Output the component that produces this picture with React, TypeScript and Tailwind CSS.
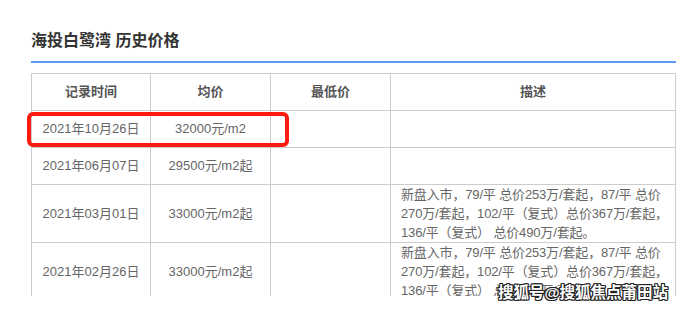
const font = { fontFamily: '"Liberation Sans", "Noto Sans CJK SC", sans-serif' };

const rows = [
  { date: "2021年10月26日", price: "32000元/m2", low: "", desc: [] as string[] },
  { date: "2021年06月07日", price: "29500元/m2起", low: "", desc: [] as string[] },
  {
    date: "2021年03月01日",
    price: "33000元/m2起",
    low: "",
    desc: [
      "新盘入市，79/平 总价253万/套起，87/平 总价",
      "270万/套起，102/平（复式）总价367万/套起，",
      "136/平（复式） 总价490万/套起。",
    ],
  },
  {
    date: "2021年02月26日",
    price: "33000元/m2起",
    low: "",
    desc: [
      "新盘入市，79/平 总价253万/套起，87/平 总价",
      "270万/套起，102/平（复式）总价367万/套起，",
      "136/平（复式） 总价490万/套起。",
    ],
  },
];

export default function App() {
  return (
    <div className="relative w-[682px] h-[310px] bg-white overflow-hidden" style={font}>
      <div className="pl-[31px] pr-[6px] pt-[29px]">
        <h2 className="text-[16px] leading-[24px] font-bold text-[#333]">海投白鹭湾 历史价格</h2>
        <div className="mt-[8px] h-[2px] bg-[#5d9cf5]" />
        <div className="mt-[10px] h-[223px] overflow-hidden">
          <table className="w-[645px] table-fixed border-collapse text-[13px] text-[#666]">
            <colgroup>
              <col className="w-[119px]" />
              <col className="w-[120px]" />
              <col className="w-[120px]" />
              <col />
            </colgroup>
            <thead>
              <tr className="h-[37px]">
                {["记录时间", "均价", "最低价", "描述"].map((h) => (
                  <th key={h} className="border border-[#ccc] font-bold text-[#555] text-center p-0">
                    {h}
                  </th>
                ))}
              </tr>
            </thead>
            <tbody>
              {rows.map((r, i) => (
                <tr key={i} className={r.desc.length ? "h-[57px]" : "h-[37px]"}>
                  <td className="border border-[#ccc] text-center p-0">{r.date}</td>
                  <td className="border border-[#ccc] text-center p-0">{r.price}</td>
                  <td className="border border-[#ccc] text-center p-0">{r.low}</td>
                  <td className="border border-[#ccc] px-[10px] py-0 leading-[19px] whitespace-nowrap tracking-[-0.15px]">
                    {r.desc.map((line, j) => (
                      <div key={j}>{line}</div>
                    ))}
                  </td>
                </tr>
              ))}
            </tbody>
          </table>
        </div>
      </div>

      {/* red highlight box */}
      <div className="absolute left-[27px] top-[112px] w-[262px] h-[35px] border-[4px] border-[#ff1a10] rounded-[6px]" />

      {/* watermark */}
      <div
        className="absolute left-[498px] top-[284px] text-[15.5px] leading-[18px] font-bold text-white whitespace-nowrap"
        style={{
          textShadow:
            "1px 0 0 #222, -1px 0 0 #222, 0 1px 0 #222, 0 -1px 0 #222, 1px 1px 0 #222, -1px -1px 0 #222, 1px -1px 0 #222, -1px 1px 0 #222",
        }}
      >
        搜狐号@搜狐焦点莆田站
      </div>
    </div>
  );
}
